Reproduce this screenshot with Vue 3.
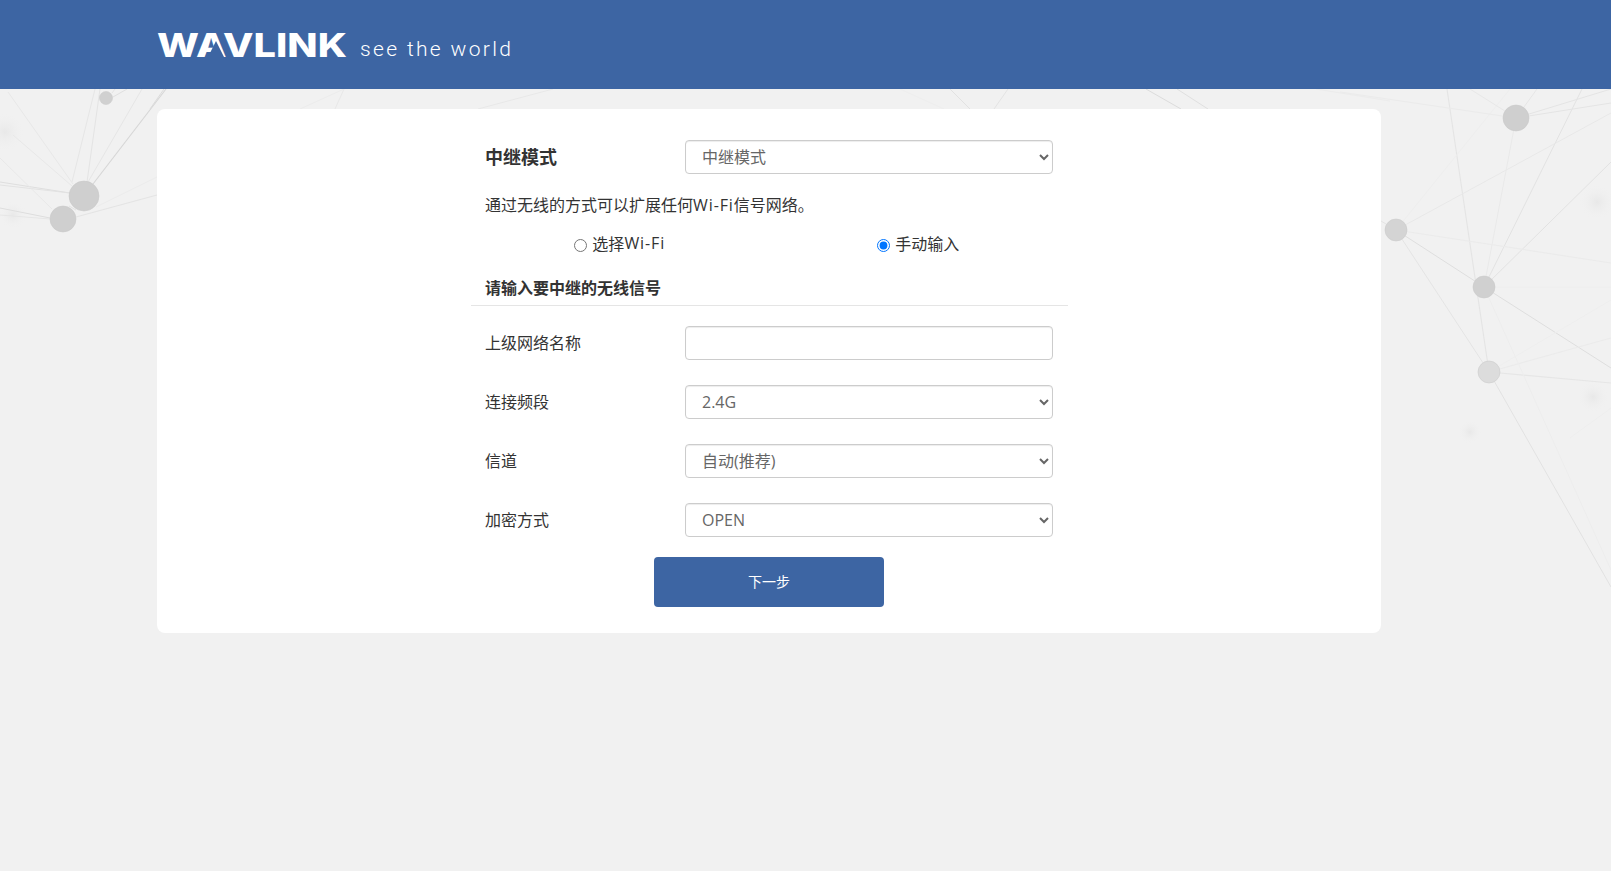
<script setup>
const lines = [
  // left cluster
  [166,89,93,184,'#d6d6d6',1.1],[142,89,88,182,'#e6e6e6',1],[100,89,87,182,'#e4e4e4',1],[95,89,72,182,'#e6e6e6',1],
  [8,92,73,184,'#e8e8e8',1],[13,135,72,186,'#e8e8e8',1],[0,182,70,193,'#dedede',1],[0,185,70,193,'#e2e2e2',1],
  [0,158,52,209,'#e8e8e8',1],[0,208,50,218,'#dedede',1],[0,215,50,219,'#e6e6e6',1],[76,217,157,195,'#e4e4e4',1.2],
  [96,207,157,177,'#ececec',1],[69,206,76,210,'#e2e2e2',1],[113,97,127,89,'#e0e0e0',1],[112,93,115,89,'#e4e4e4',1],
  [164,89,150,109,'#dcdcdc',1],[344,89,335,109,'#e8e8e8',1],[344,89,300,109,'#ececec',1],[553,89,478,109,'#e8e8e8',1],
  // top strip
  [950,89,970,109,'#e2e2e2',1],[1008,89,994,109,'#e4e4e4',1],[1146,89,1181,109,'#dcdcdc',1],[1177,89,1208,109,'#e0e0e0',1],
  [900,89,944,109,'#eeeeee',1],[1316,89,1390,101,'#ececec',1],
  // right cluster
  [1447,89,1489,372,'#e4e4e4',1.1],[1396,230,1484,287,'#dedede',1],[1396,230,1489,372,'#e4e4e4',1],[1381,221,1396,230,'#e4e4e4',1],
  [1484,287,1611,368,'#dedede',1],[1484,287,1611,162,'#e2e2e2',1],[1484,287,1582,89,'#e2e2e2',1],[1484,287,1611,287,'#eeeeee',1],
  [1489,372,1611,587,'#e2e2e2',1],[1489,372,1611,383,'#e6e6e6',1.2],[1489,372,1611,338,'#ebebeb',1.2],[1516,118,1484,287,'#e9e9e9',1],
  [1484,287,1611,570,'#ededed',1],[1396,230,1611,263,'#ebebeb',1.2],[1396,230,1611,113,'#e8e8e8',1],[1396,230,1510,89,'#eeeeee',1],
  [1516,118,1611,89,'#e4e4e4',1],[1516,118,1611,103,'#e4e4e4',1],[1340,92,1516,118,'#ebebeb',1],[1470,89,1516,118,'#e8e8e8',1],
  [1516,118,1537,89,'#e6e6e6',1],[1570,438,1611,408,'#eeeeee',1],[1489,372,1611,300,'#eeeeee',1],
]
const nodes = [
  [84,196,15,'#cfcfcf'],[63,219,13,'#cfcfcf'],[106,98,6.5,'#d0d0d0'],
  [1516,118,13,'#cfcfcf'],[1396,230,11,'#d4d4d4'],[1484,287,11,'#d0d0d0'],[1489,372,11,'#dcdcdc'],
]
const spots = [[5,132,20],[13,215,14],[1597,202,18],[1593,397,16],[1470,432,12]]
const rows = [
  { label: '连接频段', value: '2.4G', options: ['2.4G', '5G'] },
  { label: '信道', value: '自动(推荐)', options: ['自动(推荐)'] },
  { label: '加密方式', value: 'OPEN', options: ['OPEN', 'WPA2-PSK'] },
]
</script>

<template>
  <div class="page">
    <svg class="net" width="1611" height="871" viewBox="0 0 1611 871" aria-hidden="true">
      <defs>
        <radialGradient id="spot"><stop offset="0" stop-color="#e8e8e8" /><stop offset="1" stop-color="#f1f1f1" stop-opacity="0" /></radialGradient>
      </defs>
      <circle v-for="(s, i) in spots" :key="'s' + i" :cx="s[0]" :cy="s[1]" :r="s[2]" fill="url(#spot)" />
      <line v-for="(l, i) in lines" :key="'l' + i" :x1="l[0]" :y1="l[1]" :x2="l[2]" :y2="l[3]" :stroke="l[4]" :stroke-width="l[5]" />
      <circle v-for="(n, i) in nodes" :key="'n' + i" :cx="n[0]" :cy="n[1]" :r="n[2]" :fill="n[3]" stroke="#c8c8c8" stroke-opacity=".5" />
    </svg>

    <header class="top">
      <div class="brand">
        <svg class="logo" width="190" height="26" viewBox="0 0 190 26" role="img" aria-label="WAVLINK">
          <text x="0" y="25" textLength="190" lengthAdjust="spacingAndGlyphs" class="logo-text">WAVLINK</text>
          <polygon points="59,9 51,25 67,25" fill="#3d65a3" />
        </svg>
        <span class="tagline">see the world</span>
      </div>
    </header>

    <main class="main">
      <section class="card">
        <form class="form" @submit.prevent>
          <div class="row">
            <label class="label title">中继模式</label>
            <select class="control"><option>中继模式</option></select>
          </div>
          <p class="desc">通过无线的方式可以扩展任何<span class="latin">Wi-Fi</span>信号网络。</p>
          <div class="radios">
            <label class="radio"><input type="radio" name="way" />选择<span class="latin">Wi-Fi</span></label>
            <label class="radio"><input type="radio" name="way" checked />手动输入</label>
          </div>
          <h3 class="section">请输入要中继的无线信号</h3>
          <div class="row">
            <label class="label">上级网络名称</label>
            <input class="control" type="text" />
          </div>
          <div v-for="r in rows" :key="r.label" class="row">
            <label class="label">{{ r.label }}</label>
            <select class="control">
              <option v-for="o in r.options" :key="o">{{ o }}</option>
            </select>
          </div>
          <button class="next" type="submit">下一步</button>
        </form>
      </section>
    </main>
  </div>
</template>

<style>
html, body { margin: 0; background: #f1f1f1; }
</style>

<style scoped>
.page {
  position: relative;
  height: 871px;
  overflow: hidden;
  background: #f1f1f1;
  font-family: "Open Sans", "Noto Sans CJK SC", sans-serif;
  color: #333;
}
.net { position: absolute; left: 0; top: 0; }
.top {
  position: relative;
  height: 89px;
  background: #3d65a3;
  padding-left: 157px;
  box-sizing: border-box;
}
.brand { display: flex; align-items: flex-start; padding-top: 32px; }
.logo { display: block; overflow: visible; }
.logo-text {
  font-family: Inter, "Liberation Sans", sans-serif;
  font-weight: 800;
  font-size: 33px;
  fill: #fff;
}
.tagline {
  margin: 4px 0 0 13px;
  font-family: Roboto, "Liberation Sans", sans-serif;
  font-weight: 300;
  font-size: 21px;
  line-height: 26px;
  letter-spacing: 2.35px;
  color: #fff;
}
.main { position: relative; padding: 20px 230px 0 157px; }
.card {
  width: 1224px;
  height: 524px;
  box-sizing: border-box;
  padding-top: 31px;
  background: #fff;
  border-radius: 8px;
}
.form { width: 597px; margin-left: 314px; display: flex; flex-direction: column; }
.row {
  display: flex;
  align-items: center;
  height: 34px;
  padding-left: 14px;
  margin-bottom: 25px;
}
.row:first-child { margin-bottom: 0; }
.label { width: 200px; padding-bottom: 2px; font-size: 16px; color: #333; }
.title { font-size: 18px; font-weight: 700; }
.control {
  width: 368px;
  height: 34px;
  box-sizing: border-box;
  padding: 0 12px;
  border: 1px solid #ccc;
  border-radius: 4px;
  background: #fff;
  box-shadow: inset 0 1px 1px rgba(0, 0, 0, .075);
  font: inherit;
  font-size: 16px;
  color: #666;
  outline: none;
}
.latin { letter-spacing: .9px; }
.desc { margin: 14px 0 6px; padding-left: 14px; font-size: 16px; line-height: 34px; }
.radios { display: grid; grid-template-columns: 1fr 1fr; height: 34px; }
.radio { display: flex; align-items: center; justify-content: center; padding-bottom: 4px; font-size: 16px; }
.radio input { width: 13px; height: 13px; margin: 4px 5px 0 -1px; }
.section {
  margin: 9px 0 20px;
  padding-left: 14px;
  height: 35px;
  box-sizing: border-box;
  border-bottom: 1px solid #e5e5e5;
  font-size: 16px;
  font-weight: 700;
  line-height: 34px;
}
.next {
  width: 230px;
  height: 50px;
  margin: -5px 0 0 183px;
  padding: 0 0 2px;
  border: 0;
  border-radius: 4px;
  background: #3d65a3;
  color: #fff;
  font: inherit;
  font-size: 14px;
}
</style>
